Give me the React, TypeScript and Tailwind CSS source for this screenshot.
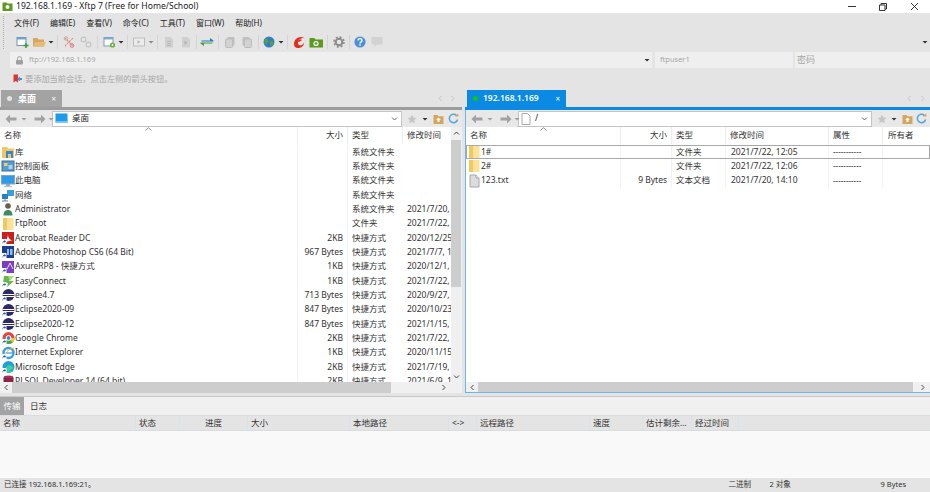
import React from 'react';

const FONT = '"Noto Sans", "Noto Sans CJK SC", sans-serif';

const Caret: React.FC<{ className?: string }> = ({ className = '' }) => (
  <svg width="8" height="6" viewBox="0 0 8 6" className={`shrink-0 ${className}`}>
    <path d="M1.5 2h5L4 4.6z" fill="#333" />
  </svg>
);

const Sep: React.FC<{ className?: string }> = ({ className = 'mx-[2.5px]' }) => (
  <div className={`h-[14px] w-px shrink-0 bg-[#d4d4d4] ${className}`} />
);

const Tool: React.FC<{ children: React.ReactNode }> = ({ children }) => (
  <svg width="16" height="14" viewBox="0 0 16 14" className="mx-[0.5px] shrink-0">
    {children}
  </svg>
);

const toolbar: React.ReactNode[] = [
  <Tool key="new">
    <rect x="3" y="2.5" width="9" height="8" fill="#fff" stroke="#6d93ae" />
    <rect x="3" y="2.5" width="9" height="2" fill="#6aa8d8" />
    <path d="M12 8v5M9.5 10.5h5" stroke="#2f9e3a" strokeWidth="1.5" />
  </Tool>,
  <Tool key="open">
    <path d="M2 3h4.5l1 1.5H13V11.5H2z" fill="#d6a75e" />
    <path d="M4 7h11l-2 4.5H2z" fill="#e5bb77" />
  </Tool>,
  <Caret key="c1" className="-ml-[1px]" />,
  <Sep key="s1" />,
  <Tool key="link">
    <path d="M4 3l8 8M4 11l8-8" stroke="#dc8a8a" strokeWidth="1.1" strokeDasharray="2 1" />
    <circle cx="5" cy="3.5" r="1.8" fill="none" stroke="#cfa8a8" />
    <circle cx="11" cy="10.5" r="1.8" fill="none" stroke="#d87878" />
  </Tool>,
  <Tool key="unlink">
    <circle cx="5.5" cy="4.5" r="2.4" fill="none" stroke="#c4c4c4" strokeWidth="1.1" />
    <circle cx="10.5" cy="9.5" r="2.4" fill="none" stroke="#c4c4c4" strokeWidth="1.1" />
    <path d="M7 6l2 2" stroke="#c4c4c4" />
  </Tool>,
  <Sep key="s2" />,
  <Tool key="prop">
    <rect x="3" y="2.5" width="9" height="8.5" fill="#fff" stroke="#7c9ab0" />
    <rect x="3" y="2.5" width="9" height="2" fill="#78aed8" />
    <circle cx="11.5" cy="10" r="2.6" fill="#6fae3c" />
    <circle cx="11.5" cy="10" r="0.9" fill="#fff" />
  </Tool>,
  <Caret key="c2" className="-ml-[1px]" />,
  <Sep key="s3" />,
  <Tool key="term">
    <rect x="2.5" y="3" width="11" height="8" fill="#ececec" stroke="#bdbdbd" />
    <path d="M6.5 5.2l3 1.8-3 1.8z" fill="#b4b4b4" />
  </Tool>,
  <Caret key="c3" className="-ml-[1px] opacity-50" />,
  <Sep key="s4" />,
  <Tool key="d1">
    <path d="M4 2h5.5L12 4.5V12.5H4z" fill="#d0d0d0" />
    <path d="M6 6.5h4M6 8.5h4M6 10.5h4" stroke="#b8b8b8" />
  </Tool>,
  <Tool key="d2">
    <path d="M4 2h5.5L12 4.5V12.5H4z" fill="#d0d0d0" />
    <path d="M6.5 5.5l3 2.3-3 2.3z" fill="#b4b4b4" />
  </Tool>,
  <Sep key="s5" className="ml-[1px] mr-[2px]" />,
  <Tool key="sync">
    <path d="M2.5 5.5h8.5V3l3.5 2.5v1H2.5z" fill="#1d7fc4" />
    <path d="M13.5 8.5H5V11L1.5 8.5v-1h12z" fill="#4a9a3a" />
  </Tool>,
  <Sep key="s6" className="ml-[2.5px] mr-[2px]" />,
  <Tool key="copy">
    <rect x="5.5" y="2" width="7" height="8.5" rx="1" fill="#c0c0c0" />
    <rect x="3.5" y="4" width="7" height="8.5" rx="1" fill="#d2d2d2" stroke="#bcbcbc" />
  </Tool>,
  <Tool key="paste">
    <rect x="3.5" y="2" width="7" height="8.5" rx="1" fill="#c0c0c0" />
    <rect x="5.5" y="4" width="7" height="8.5" rx="1" fill="#d2d2d2" stroke="#bcbcbc" />
  </Tool>,
  <Sep key="s7" className="ml-[2.5px] mr-[2px]" />,
  <Tool key="globe">
    <circle cx="8" cy="7" r="5.5" fill="#2f7fc8" />
    <path d="M4.5 3.2c1.8 0 2.7 1 2.7 2.7S5.5 7.8 5.5 9.5 3.4 8 3.4 6zM9 6.2c1.8-.9 3.6 0 3.6 1.8s-1.8 3.3-2.7 2.5-1.800-3.400-.9-4.300z" fill="#5aa040" />
  </Tool>,
  <Caret key="c4" className="-ml-[1px]" />,
  <Sep key="s8" />,
  <Tool key="xshell">
    <path d="M3 9c0-4 3-7 7-7 2 0 3 1 3 1-3 0-6 2-6 5 0 2 2 3 4 2l2-2c0 3-3 5-6 5s-4-2-4-4z" fill="#e0301e" />
    <path d="M6 7c1-2 3-3 5-2-1 1-3 2-5 2z" fill="#e0301e" />
  </Tool>,
  <Tool key="xftp">
    <path d="M1.500 3h5l1 1.500h7.500V12.500H1.500z" fill="#5b9a1c" />
    <circle cx="8" cy="8.500" r="2.600" fill="#fff" />
    <circle cx="8" cy="8.500" r="1.300" fill="#5b9a1c" />
  </Tool>,
  <Sep key="s9" />,
  <Tool key="gear">
    <circle cx="8" cy="7" r="3.300" fill="none" stroke="#8c8c8c" strokeWidth="2" />
    <circle cx="8" cy="7" r="5" fill="none" stroke="#8c8c8c" strokeWidth="1.500" strokeDasharray="2 1.930" />
  </Tool>,
  <Sep key="s10" className="ml-[1px] mr-[2px]" />,
  <Tool key="help">
    <circle cx="8" cy="7" r="5.600" fill="#4a90d2" />
    <path d="M6 5.400C6 4.200 7 3.600 8 3.600s2 .7 2 1.800c0 1.400-2 1.500-2 3" fill="none" stroke="#fff" strokeWidth="1.400" />
    <rect x="7.300" y="9.300" width="1.400" height="1.400" fill="#fff" />
  </Tool>,
  <Tool key="chat">
    <path d="M2.500 2h11v7.500H8l-2.500 2.500V9.500h-3z" fill="#d2d2d2" />
  </Tool>,
];

const Shortcut = () => (
  <>
    <rect x="0.500" y="8" width="5" height="5.500" fill="#fff" />
    <path d="M1.500 12.500c0-2 1-2.700 2-2.700V8.800l1.500 1.700-1.500 1.600v-1c-.8 0-1.500.3-2 1.900z" fill="#1d5fa8" />
  </>
);

type Kind =
  | 'lib' | 'panel' | 'pc' | 'net' | 'user' | 'folder' | 'acrobat' | 'ps' | 'axure'
  | 'easy' | 'eclipse' | 'chrome' | 'ie' | 'edge' | 'plsql' | 'txt';

const FileIcon: React.FC<{ kind: Kind }> = ({ kind }) => {
  const body: Record<Kind, React.ReactNode> = {
    lib: (
      <>
        <path d="M1 2h5l1 1.500h6V13H1z" fill="#f3c65f" />
        <rect x="5" y="6" width="7" height="7" fill="#2e8ae0" />
        <rect x="7" y="9" width="3" height="4" fill="#f3c65f" />
      </>
    ),
    panel: (
      <>
        <rect x="1" y="2" width="12" height="10" fill="#5a9bd0" stroke="#39719e" />
        <rect x="3" y="4" width="3.500" height="3" fill="#f0d060" />
        <rect x="7.500" y="6" width="4" height="4" fill="#a6d6f2" />
      </>
    ),
    pc: (
      <>
        <rect x="0.500" y="1.500" width="13" height="8.500" fill="#2f9be8" stroke="#7ba6c6" />
        <rect x="5" y="10" width="4" height="2" fill="#9aa8b2" />
        <rect x="3" y="12" width="8" height="1.200" fill="#b8c2ca" />
      </>
    ),
    net: (
      <>
        <rect x="6" y="2" width="7" height="6" fill="#38a0e0" />
        <rect x="1" y="6" width="6" height="5" fill="#2a7fc0" />
        <path d="M4 11v2M1 13h6" stroke="#67829a" />
      </>
    ),
    user: (
      <>
        <circle cx="7" cy="4" r="2.800" fill="#6d5a48" />
        <path d="M2.500 13.500c0-4 2-5.500 4.500-5.500s4.500 1.500 4.500 5.500z" fill="#3c8a68" />
      </>
    ),
    folder: (
      <>
        <path d="M2 1h5v12H2z" fill="#f0c95f" />
        <path d="M6 1h6.500v12H6z" fill="#fbe19a" />
      </>
    ),
    acrobat: (
      <>
        <rect x="1" y="1" width="12" height="12" fill="#c8201c" />
        <path d="M7 3c0 4 2 6 4.500 6.500C8 9.500 5 11 3.500 12 5 10 7 6 7 3z" fill="#fff" />
        <Shortcut />
      </>
    ),
    ps: (
      <>
        <rect x="1" y="1" width="12" height="12" fill="#1c3f8a" />
        <rect x="6" y="4" width="2" height="6" fill="#8fc0ee" />
        <rect x="9" y="4" width="2.500" height="6" fill="#8fc0ee" />
        <Shortcut />
      </>
    ),
    axure: (
      <>
        <rect x="1" y="1" width="12" height="12" fill="#7d3fc0" />
        <path d="M6 9l3-6 3 6" fill="none" stroke="#f0d8ff" />
        <Shortcut />
      </>
    ),
    easy: (
      <>
        <path d="M3 2h8L8 7h5l-7 6 1-4H2z" fill="#66b84a" />
        <path d="M7 2h6L9 7z" fill="#a9d88e" />
        <Shortcut />
      </>
    ),
    eclipse: (
      <>
        <circle cx="7.500" cy="7" r="6" fill="#2b2a66" />
        <rect x="1.500" y="6" width="12" height="1" fill="#fff" />
        <rect x="1.500" y="8" width="12" height="1" fill="#fff" />
        <Shortcut />
      </>
    ),
    chrome: (
      <>
        <circle cx="7.500" cy="7" r="6" fill="#e6463a" />
        <path d="M7.500 7l5.200 3A6 6 0 0 1 2.300 10z" fill="#3fa757" />
        <path d="M7.500 7h6a6 6 0 0 1-2 4.500z" fill="#f6c42c" />
        <circle cx="7.500" cy="7" r="2.400" fill="#3d85e6" stroke="#fff" />
        <Shortcut />
      </>
    ),
    ie: (
      <>
        <circle cx="7.500" cy="7" r="5" fill="none" stroke="#3a9fe0" strokeWidth="2.400" />
        <rect x="5" y="6.400" width="7" height="1.200" fill="#3a9fe0" />
        <path d="M2 11C5 5 10 2 13 2" fill="none" stroke="#e8b63c" strokeWidth="1" />
        <Shortcut />
      </>
    ),
    edge: (
      <>
        <circle cx="7.500" cy="7" r="6" fill="#1fa0d8" />
        <path d="M4 9c1-4 6-5 8-2 1 2-1 3-3 3-1 1 1 2 3 1-2 3-7 2-8-2z" fill="#3fd0a0" />
        <Shortcut />
      </>
    ),
    plsql: (
      <>
        <ellipse cx="7.500" cy="4" rx="5" ry="2.400" fill="#a03058" />
        <rect x="2.500" y="4" width="10" height="8" fill="#8a2448" />
        <Shortcut />
      </>
    ),
    txt: (
      <>
        <path d="M3 1h6l3 3v9H3z" fill="#dcdcdc" stroke="#a8a8a8" />
        <path d="M9 1v3h3" fill="#f4f4f4" stroke="#a8a8a8" />
      </>
    ),
  };
  return (
    <svg width="14" height="14" viewBox="0 0 14 14" className="shrink-0">
      {body[kind]}
    </svg>
  );
};

const leftRows: { kind: Kind; name: string; size: string; type: string; date: string }[] = [
  { kind: 'lib', name: '库', size: '', type: '系统文件夹', date: '' },
  { kind: 'panel', name: '控制面板', size: '', type: '系统文件夹', date: '' },
  { kind: 'pc', name: '此电脑', size: '', type: '系统文件夹', date: '' },
  { kind: 'net', name: '网络', size: '', type: '系统文件夹', date: '' },
  { kind: 'user', name: 'Administrator', size: '', type: '系统文件夹', date: '2021/7/20,' },
  { kind: 'folder', name: 'FtpRoot', size: '', type: '文件夹', date: '2021/7/22,' },
  { kind: 'acrobat', name: 'Acrobat Reader DC', size: '2KB', type: '快捷方式', date: '2020/12/25' },
  { kind: 'ps', name: 'Adobe Photoshop CS6 (64 Bit)', size: '967 Bytes', type: '快捷方式', date: '2021/7/7, 1' },
  { kind: 'axure', name: 'AxureRP8 - 快捷方式', size: '1KB', type: '快捷方式', date: '2020/12/1,' },
  { kind: 'easy', name: 'EasyConnect', size: '1KB', type: '快捷方式', date: '2021/7/22,' },
  { kind: 'eclipse', name: 'eclipse4.7', size: '713 Bytes', type: '快捷方式', date: '2020/9/27,' },
  { kind: 'eclipse', name: 'Eclipse2020-09', size: '847 Bytes', type: '快捷方式', date: '2020/10/23' },
  { kind: 'eclipse', name: 'Eclipse2020-12', size: '847 Bytes', type: '快捷方式', date: '2021/1/15,' },
  { kind: 'chrome', name: 'Google Chrome', size: '2KB', type: '快捷方式', date: '2021/7/22,' },
  { kind: 'ie', name: 'Internet Explorer', size: '1KB', type: '快捷方式', date: '2020/11/15' },
  { kind: 'edge', name: 'Microsoft Edge', size: '2KB', type: '快捷方式', date: '2021/7/19,' },
  { kind: 'plsql', name: 'PLSQL Developer 14 (64 bit)', size: '2KB', type: '快捷方式', date: '2021/6/9, 1' },
];

const rightRows: { kind: Kind; name: string; size: string; type: string; date: string; perm: string; sel?: boolean }[] = [
  { kind: 'folder', name: '1#', size: '', type: '文件夹', date: '2021/7/22, 12:05', perm: '-----------', sel: true },
  { kind: 'folder', name: '2#', size: '', type: '文件夹', date: '2021/7/22, 12:06', perm: '-----------' },
  { kind: 'txt', name: '123.txt', size: '9 Bytes', type: '文本文档', date: '2021/7/20, 14:10', perm: '-----------' },
];

const Arrow: React.FC<{ dir: 'l' | 'r' }> = ({ dir }) => (
  <svg width="12" height="10" viewBox="0 0 12 10" className="shrink-0">
    <path d={dir === 'l' ? 'M5 0.500L0.500 5 5 9.500V6.500h6.500v-3H5z' : 'M7 0.500L11.500 5 7 9.500V6.500H0.500v-3H7z'} fill="#a2a2a2" />
  </svg>
);

const Chev: React.FC<{ d: string; c?: string }> = ({ d, c = '#444' }) => (
  <svg width="7" height="7" viewBox="0 0 7 7" className="shrink-0">
    <path d={d} fill="none" stroke={c} strokeWidth="1" />
  </svg>
);

const NavBar: React.FC<{ icon: React.ReactNode; path: string; boxW: string }> = ({ icon, path, boxW }) => (
  <div className="flex h-[17px] items-center bg-[#e8e8e8]">
    <div className="flex w-[52px] shrink-0 items-center pl-[5px]">
      <Arrow dir="l" />
      <span className="ml-[3px] mr-[6px] opacity-40"><Caret /></span>
      <Arrow dir="r" />
      <span className="ml-[1px] opacity-40"><Caret /></span>
    </div>
    <div className={`flex h-[16px] items-center border border-[#c4c4c4] bg-white pl-[2px] pr-[3px] ${boxW}`}>
      {icon}
      <span className="ml-[4px] flex-1 text-[8.5px] text-[#222]">{path}</span>
      <Chev d="M1 2.500L3.500 5 6 2.500" c="#666" />
    </div>
    <div className="flex flex-1 items-center justify-between pl-[5px] pr-[3px]">
      <svg width="10" height="10" viewBox="0 0 10 10">
        <path d="M5 .5l1.400 3 3.100.4-2.300 2.200.6 3.200L5 7.800 2.200 9.300l.6-3.200L.5 3.900l3.100-.4z" fill="#c6c6c6" />
      </svg>
      <Caret />
      <svg width="11" height="10" viewBox="0 0 11 10">
        <path d="M.5 1h4l1 1.200h5V10H.5z" fill="#d7a45c" />
        <path d="M5.500 3.500L8 6H6.500v2h-2V6H3z" fill="#fff" />
      </svg>
      <svg width="11" height="11" viewBox="0 0 11 11">
        <path d="M9.600 6.500A4.200 4.200 0 1 1 8.400 2.400" fill="none" stroke="#5aa4dc" strokeWidth="1.500" />
        <path d="M7 3.600h3.400V.4z" fill="#e09a50" />
      </svg>
    </div>
  </div>
);

const Th: React.FC<{ w: string; right?: boolean; children?: React.ReactNode }> = ({ w, right, children }) => (
  <div className={`flex h-full shrink-0 items-center border-r border-[#e6edf4] px-[4px] ${w} ${right ? 'justify-end' : ''}`}>
    <span className="truncate">{children}</span>
  </div>
);

// little sort mark that sits on the header's top edge
const SortMark: React.FC<{ className: string }> = ({ className }) => (
  <svg width="7" height="4" viewBox="0 0 7 4" className={`absolute top-0 ${className}`}>
    <path d="M0.500 3.500L3.500 0.800 6.500 3.500" fill="none" stroke="#8a8a8a" />
  </svg>
);

const LeftPane = () => (
  <div className="flex w-[462px] shrink-0 flex-col">
    <div className="flex h-[17px] items-end justify-between pl-px pr-[6px]">
      <div className="flex h-[17px] w-[61px] items-center bg-[#a3a3a3] px-[6px] text-[9px] text-white">
        <span className="h-[5px] w-[5px] rounded-full bg-[#e4e4e4]" />
        <span className="ml-[6px] flex-1 font-semibold">桌面</span>
        <span className="text-[8px]">×</span>
      </div>
      <div className="flex h-[17px] items-center gap-[5px]">
        <Chev d="M4.500 1L2 3.500 4.500 6" c="#c4c4c4" />
        <Chev d="M2.500 1L5 3.500 2.500 6" c="#c4c4c4" />
      </div>
    </div>
    <div className="h-[3px] bg-[#9c9c9c]" />
    <NavBar
      boxW="w-[350px]"
      path="桌面"
      icon={
        <svg width="13" height="11" viewBox="0 0 13 11">
          <rect x="0.500" y="0.500" width="12" height="9" fill="#1d9be8" />
          <rect x="0.500" y="8" width="12" height="2" fill="#7cc4f0" />
        </svg>
      }
    />
    <div className="flex min-h-0 flex-1 bg-white">
      <div className="flex min-w-0 flex-1 flex-col">
        <div className="relative flex h-[17px] shrink-0 items-center text-[8.5px] text-[#333]">
          <SortMark className="left-[145px]" />
          <Th w="w-[298px]">名称</Th>
          <Th w="w-[50px]" right>大小</Th>
          <Th w="w-[55px]">类型</Th>
          <div className="pl-[4px]">修改时间</div>
        </div>
        <div className="min-h-0 flex-1 overflow-hidden pt-px">
          {leftRows.map((r) => (
            <div key={r.name} className="flex h-[14.33px] items-center whitespace-nowrap text-[8.5px] text-[#333]">
              <div className="flex h-full w-[298px] shrink-0 items-center border-r border-[#eef3f8] pl-[1px]">
                <FileIcon kind={r.kind} />
                <span>{r.name}</span>
              </div>
              <div className="flex h-full w-[50px] shrink-0 items-center justify-end border-r border-[#eef3f8] pr-[4px]">{r.size}</div>
              <div className="flex h-full w-[55px] shrink-0 items-center pl-[4px]">{r.type}</div>
              <div className="w-[48px] overflow-hidden pl-[4px]">{r.date}</div>
            </div>
          ))}
        </div>
      </div>
      <div className="flex w-[11px] shrink-0 flex-col bg-[#f0f0f0]">
        <div className="flex h-[13px] items-center justify-center"><Chev d="M1 4.500L3.500 2 6 4.500" /></div>
        <div className="h-[147px] w-[10px] bg-[#cdcdcd]" />
        <div className="flex-1" />
        <div className="flex h-[11px] items-center justify-center"><Chev d="M1 2.500L3.500 5 6 2.500" /></div>
      </div>
    </div>
    <div className="flex h-[11px] shrink-0 items-center bg-[#f0f0f0]">
      <div className="flex w-[12px] justify-center"><Chev d="M4.500 1L2 3.500 4.500 6" /></div>
      <div className="h-full w-[379px] bg-[#cdcdcd]" />
      <div className="flex w-[60px] justify-end pr-[4px]"><Chev d="M2.500 1L5 3.500 2.500 6" /></div>
    </div>
  </div>
);

const RightPane = () => (
  <div className="flex min-w-0 flex-1 flex-col">
    <div className="flex h-[17px] items-end justify-between pl-[2px] pr-[4px]">
      <div className="flex h-[17px] w-[99px] items-center bg-[#0a8ae2] px-[6px] text-[8.5px] font-semibold text-white">
        <span className="h-[5px] w-[5px] rounded-full bg-[#16c60c]" />
        <span className="ml-[5px] flex-1">192.168.1.169</span>
        <span className="text-[8px] font-normal">×</span>
      </div>
      <div className="flex h-[17px] items-center gap-[6px]">
        <Chev d="M4.500 1L2 3.500 4.500 6" c="#c4c4c4" />
        <Chev d="M2.500 1L5 3.500 2.500 6" c="#c4c4c4" />
      </div>
    </div>
    <div className="h-[3px] bg-[#0a8ae2]" />
    <div className="flex min-h-0 flex-1 flex-col border-b border-l border-[#6db6ec] bg-white">
      <NavBar
        boxW="w-[354px]"
        path="/"
        icon={
          <svg width="10" height="12" viewBox="0 0 10 12">
            <path d="M1 .5h5.500L9 3v8.500H1z" fill="#fff" stroke="#a8a8a8" />
          </svg>
        }
      />
      <div className="relative flex h-[17px] shrink-0 items-center text-[8.5px] text-[#333]">
        <SortMark className="left-[74px]" />
        <Th w="w-[155px]">名称</Th>
        <Th w="w-[51px]" right>大小</Th>
        <Th w="w-[54px]">类型</Th>
        <Th w="w-[103px]">修改时间</Th>
        <Th w="w-[54px]">属性</Th>
        <div className="pl-[5px]">所有者</div>
      </div>
      <div className="min-h-0 flex-1 overflow-hidden pt-px">
        {rightRows.map((r) => (
          <div
            key={r.name}
            className={`flex h-[14.33px] items-center whitespace-nowrap text-[8.5px] text-[#333] ${
              r.sel ? 'outline outline-1 -outline-offset-1 outline-[#a8a8a8]' : ''
            }`}
          >
            <div className="flex h-full w-[155px] shrink-0 items-center border-r border-[#eef3f8] pl-[1px]">
              <FileIcon kind={r.kind} />
              <span>{r.name}</span>
            </div>
            <div className="flex h-full w-[51px] shrink-0 items-center justify-end border-r border-[#eef3f8] pr-[4px]">{r.size}</div>
            <div className="flex h-full w-[54px] shrink-0 items-center border-r border-[#eef3f8] pl-[4px]">{r.type}</div>
            <div className="flex h-full w-[103px] shrink-0 items-center border-r border-[#eef3f8] pl-[5px]">{r.date}</div>
            <div className="flex h-full w-[54px] shrink-0 items-center border-r border-[#eef3f8] pl-[4px] text-[8px]">{r.perm}</div>
          </div>
        ))}
      </div>
      <div className="flex h-[10px] shrink-0 items-center bg-[#f0f0f0]">
        <div className="flex w-[12px] justify-center"><Chev d="M4.500 1L2 3.500 4.500 6" /></div>
        <div className="h-full w-[435px] bg-[#cdcdcd]" />
        <div className="flex flex-1 justify-end pr-[4px]"><Chev d="M2.500 1L5 3.500 2.500 6" /></div>
      </div>
    </div>
  </div>
);

const transferCols: { w: string; label: string; right?: boolean }[] = [
  { w: 'w-[136px]', label: '名称' },
  { w: 'w-[44px]', label: '状态' },
  { w: 'w-[68px]', label: '进度', right: true },
  { w: 'w-[102px]', label: '大小' },
  { w: 'w-[99px]', label: '本地路径' },
  { w: 'w-[28px]', label: '<->' },
  { w: 'w-[113px]', label: '远程路径' },
  { w: 'w-[53px]', label: '速度' },
  { w: 'w-[49px]', label: '估计剩余...' },
  { w: 'w-[47px]', label: '经过时间' },
];

export default function App() {
  return (
    <div className="flex h-[492px] w-[930px] flex-col overflow-hidden bg-[#e4e4e4]" style={{ fontFamily: FONT }}>
      <div className="flex h-[13px] shrink-0 items-center bg-white pl-[2px] text-[8.6px] text-[#222]">
        <svg width="11" height="9" viewBox="0 0 11 9" className="mr-[3px] shrink-0">
          <path d="M.5.5h4l1 1h5V9H.5z" fill="#5b9a1c" />
          <circle cx="5.500" cy="5" r="2" fill="#fff" />
        </svg>
        <span className="flex-1">192.168.1.169 - Xftp 7 (Free for Home/School)</span>
        <div className="flex items-center gap-[23px] pr-[11px]">
          <div className="h-px w-[8px] bg-[#333]" />
          <svg width="8" height="8" viewBox="0 0 8 8">
            <path d="M.5 2h5.500v5.500H.5zM2 2V.5h5.500V6H6" fill="none" stroke="#333" />
          </svg>
          <svg width="9" height="9" viewBox="0 0 9 9">
            <path d="M1 1l7 7M8 1L1 8" stroke="#333" />
          </svg>
        </div>
      </div>

      <div className="flex h-[39px] shrink-0">
        <div className="ml-[3px] mt-[3px] h-[33px] w-px shrink-0 border-l border-dotted border-[#aaa]" />
        <div className="flex flex-1 flex-col">
          <div className="flex h-[19px] items-center gap-[11px] pl-[10px] text-[8px] text-[#222]">
            {['文件(F)', '编辑(E)', '查看(V)', '命令(C)', '工具(T)', '窗口(W)', '帮助(H)'].map((m) => (
              <span key={m} className="whitespace-nowrap">{m}</span>
            ))}
          </div>
          <div className="flex h-[20px] items-center pl-[9.5px]">
            {toolbar}
            <div className="ml-auto pr-[1px]"><Caret /></div>
          </div>
        </div>
      </div>

      <div className="flex h-[16px] shrink-0 pl-[10px] text-[7.5px] text-[#a8a8a8]">
        <div className="flex w-[642px] items-center bg-[#efefef] pl-[5px] pr-px">
          <svg width="9" height="9" viewBox="0 0 9 9" className="shrink-0">
            <path d="M2.500 4V2.600a2 2 0 0 1 4 0V4" fill="none" stroke="#a0a0a0" />
            <rect x="1" y="4" width="7" height="4.500" rx="1" fill="#a0a0a0" />
          </svg>
          <span className="ml-[5px] flex-1">ftp://192.168.1.169</span>
          <Caret />
        </div>
        <div className="ml-[3px] flex w-[138px] items-center bg-[#efefef] pl-[5px]">ftpuser1</div>
        <div className="ml-[2px] flex flex-1 items-center bg-[#efefef] pl-[2px] text-[9px]">密码</div>
      </div>

      <div className="flex h-[22px] shrink-0 items-center pl-[13px] text-[8.2px] text-[#a8a8a8]">
        <svg width="9" height="10" viewBox="0 0 9 10" className="mr-[3px] shrink-0">
          <path d="M.5.5H5v8L2.800 7 .5 8.500z" fill="#e0352b" />
          <path d="M4 5l3-2.400V4h2v2H7v1.400z" fill="#4a8fd8" />
        </svg>
        要添加当前会话，点击左侧的箭头按钮。
      </div>

      <div className="flex h-[303px] shrink-0 gap-[3px]">
        <LeftPane />
        <RightPane />
      </div>

      <div className="mt-[3px] flex min-h-0 flex-1 flex-col border-t border-[#c8c8c8]">
        <div className="flex h-[18px] shrink-0 items-center bg-[#f0f0f0] text-[8.5px] text-[#333]">
          <div className="flex h-full w-[24px] items-center justify-center bg-[#a3a3a3] text-white">传输</div>
          <div className="pl-[6px]">日志</div>
        </div>
        <div className="flex h-[16px] shrink-0 items-center border-b border-t border-[#d8dde2] bg-[#e4e4e4] text-[8.5px] text-[#333]">
          {transferCols.map((c) => (
            <div
              key={c.label}
              className={`flex h-full shrink-0 items-center whitespace-nowrap border-r border-[#d8e2ec] px-[3px] ${c.w} ${c.right ? 'justify-end pr-[25px]' : ''}`}
            >
              {c.label}
            </div>
          ))}
        </div>
        <div className="flex-1 bg-[#f9f9f9]" />
        <div className="flex h-[14px] shrink-0 items-center pl-[4px] pr-[24px] text-[7.5px] text-[#333]">
          <span className="flex-1">已连接 192.168.1.169:21。</span>
          <span className="w-[41px]">二进制</span>
          <span className="w-[111px]">2 对象</span>
          <span>9 Bytes</span>
        </div>
      </div>
    </div>
  );
}
